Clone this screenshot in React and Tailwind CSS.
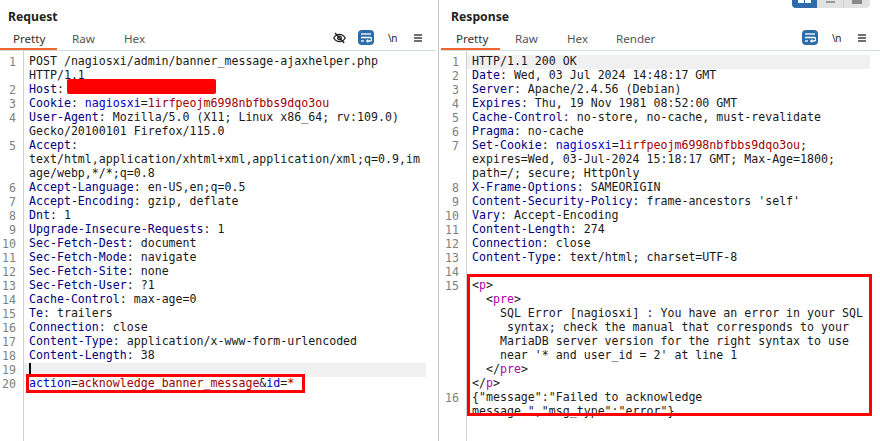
import React from 'react';

// token helpers: k = header name, n = param name, v = param value, t = tag name
const K = ({ children }) => <span className="text-[#000080]">{children}</span>;
const N = ({ children }) => <span className="text-[#0000c8]">{children}</span>;
const V = ({ children }) => <span className="text-[#a00000]">{children}</span>;
const T = ({ children }) => <span className="text-[#b000b0]">{children}</span>;

const requestRows = [
  { no: 1, text: 'POST /nagiosxi/admin/banner_message-ajaxhelper.php' },
  { text: 'HTTP/1.1' },
  { no: 2, text: <><K>Host</K>: <span className="absolute left-[43px] -top-[4px] h-[15px] w-[149px] rounded-[2px] bg-[#ff0000]" /></> },
  { no: 3, text: <><K>Cookie</K>: <N>nagiosxi</N>=<V>1irfpeojm6998nbfbbs9dqo3ou</V></> },
  { no: 4, text: <><K>User-Agent</K>: Mozilla/5.0 (X11; Linux x86_64; rv:109.0)</> },
  { text: 'Gecko/20100101 Firefox/115.0' },
  { no: 5, text: <><K>Accept</K>:</> },
  { text: 'text/html,application/xhtml+xml,application/xml;q=0.9,im' },
  { text: 'age/webp,*/*;q=0.8' },
  { no: 6, text: <><K>Accept-Language</K>: en-US,en;q=0.5</> },
  { no: 7, text: <><K>Accept-Encoding</K>: gzip, deflate</> },
  { no: 8, text: <><K>Dnt</K>: 1</> },
  { no: 9, text: <><K>Upgrade-Insecure-Requests</K>: 1</> },
  { no: 10, text: <><K>Sec-Fetch-Dest</K>: document</> },
  { no: 11, text: <><K>Sec-Fetch-Mode</K>: navigate</> },
  { no: 12, text: <><K>Sec-Fetch-Site</K>: none</> },
  { no: 13, text: <><K>Sec-Fetch-User</K>: ?1</> },
  { no: 14, text: <><K>Cache-Control</K>: max-age=0</> },
  { no: 15, text: <><K>Te</K>: trailers</> },
  { no: 16, text: <><K>Connection</K>: close</> },
  { no: 17, text: <><K>Content-Type</K>: application/x-www-form-urlencoded</> },
  { no: 18, text: <><K>Content-Length</K>: 38</> },
  { no: 19, text: <span className="absolute left-[5px] top-0 h-[11px] w-[2px] bg-black" />, active: true },
  { no: 20, text: <><N>action</N>=<V>acknowledge_banner_message</V>&amp;<N>id</N>=<V>*</V></> },
];

const responseRows = [
  { no: 1, text: 'HTTP/1.1 200 OK', active: true },
  { no: 2, text: <><K>Date</K>: Wed, 03 Jul 2024 14:48:17 GMT</> },
  { no: 3, text: <><K>Server</K>: Apache/2.4.56 (Debian)</> },
  { no: 4, text: <><K>Expires</K>: Thu, 19 Nov 1981 08:52:00 GMT</> },
  { no: 5, text: <><K>Cache-Control</K>: no-store, no-cache, must-revalidate</> },
  { no: 6, text: <><K>Pragma</K>: no-cache</> },
  { no: 7, text: <><K>Set-Cookie</K>: <N>nagiosxi</N>=<V>1irfpeojm6998nbfbbs9dqo3ou</V>;</> },
  { text: 'expires=Wed, 03-Jul-2024 15:18:17 GMT; Max-Age=1800;' },
  { text: 'path=/; secure; HttpOnly' },
  { no: 8, text: <><K>X-Frame-Options</K>: SAMEORIGIN</> },
  { no: 9, text: <><K>Content-Security-Policy</K>: frame-ancestors 'self'</> },
  { no: 10, text: <><K>Vary</K>: Accept-Encoding</> },
  { no: 11, text: <><K>Content-Length</K>: 274</> },
  { no: 12, text: <><K>Connection</K>: close</> },
  { no: 13, text: <><K>Content-Type</K>: text/html; charset=UTF-8</> },
  { no: 14, text: '' },
  { no: 15, text: <>&lt;<T>p</T>&gt;</> },
  { text: <>  &lt;<T>pre</T>&gt;</> },
  { text: "    SQL Error [nagiosxi] : You have an error in your SQL" },
  { text: "     syntax; check the manual that corresponds to your" },
  { text: '    MariaDB server version for the right syntax to use' },
  { text: "    near '* and user_id = 2' at line 1" },
  { text: <>  &lt;/<T>pre</T>&gt;</> },
  { text: <>&lt;/<T>p</T>&gt;</> },
  { no: 16, text: '{"message":"Failed to acknowledge' },
  { text: 'message.","msg_type":"error"}' },
];

const EyeSlash = () => (
  <svg width="13" height="12" viewBox="0 0 13 12" fill="none" stroke="#222" strokeWidth="1.3">
    <path d="M0.8 6C2.2 3.6 4.2 2.4 6.5 2.4S10.8 3.6 12.2 6C10.8 8.4 8.8 9.6 6.5 9.6S2.2 8.4 0.8 6Z" />
    <circle cx="6.5" cy="6" r="1.8" />
    <path d="M2 1l9.2 10" />
  </svg>
);

const WrapIcon = () => (
  <span className="flex h-[15px] w-[16px] items-center justify-center rounded-[4px] bg-[#2d6ca8]">
    <svg width="12" height="11" viewBox="0 0 12 11" fill="none" stroke="white" strokeWidth="1.3">
      <path d="M1 2h10" />
      <path d="M1 5.5h9a1.6 1.6 0 0 1 0 3.5H7" />
      <path d="M8.2 7.6 6.8 9l1.4 1.4" />
      <path d="M1 9h3" />
    </svg>
  </span>
);

const MenuIcon = () => (
  <span className="flex w-[8px] flex-col gap-px">
    <span className="h-[2px] bg-[#6f6f6f]" />
    <span className="h-[2px] bg-[#6f6f6f]" />
    <span className="h-[2px] bg-[#6f6f6f]" />
  </span>
);

const CodeRow = ({ row }) => (
  <div className="flex h-[14px]">
    <div className="w-[24px] shrink-0 border-r border-[#d0d0d0] pr-[7px] text-right leading-[14px] text-[#808080]">
      {row.no}
    </div>
    <div className={`relative flex-1 whitespace-pre pl-[5px] leading-[12px] ${row.active ? 'bg-[#f0f0f0]' : ''}`}>
      {row.text}
    </div>
  </div>
);

const tabWidths = ['w-[57px] pl-[13px]', 'w-[52px] pl-[15px]', 'w-[49px] pl-[15px]', 'pl-[15px]'];

const Pane = ({ title, tabs, rows, showEye, widthClass, titleClass, bodyClass, ruleClass, iconsClass }) => (
  <div className={`relative flex h-full shrink-0 flex-col ${widthClass}`}>
    <h2 className={`h-[33px] pt-[8px] text-[12.2px] font-bold leading-[17px] text-[#222] ${titleClass}`}>{title}</h2>
    <div className={`flex h-[18px] border-b border-[#d4dcdc] ${ruleClass}`}>
      {tabs.map((tab, i) => (
        <div
          key={tab}
          className={`h-[17px] text-[11.6px] leading-[12px] ${
            i === 0 && tabs.length === 4 ? 'w-[59px] pl-[15px]' : tabWidths[i]
          } ${i === 0 ? 'border-b-2 border-[#f0642d] text-[#333]' : 'text-[#555]'}`}
        >
          {tab}
        </div>
      ))}
    </div>
    <div className={`flex flex-1 flex-col font-['DejaVu_Sans_Mono'] text-[11.6px] text-[#1a1a1a] ${bodyClass}`}>
      <div className="h-[4px] w-[24px] shrink-0 border-r border-[#d0d0d0]" />
      {rows.map((row, i) => (
        <CodeRow key={i} row={row} />
      ))}
      <div className="w-[24px] flex-1 border-r border-[#d0d0d0]" />
    </div>
    <div className={`absolute top-[30px] flex items-center ${iconsClass}`}>
      {showEye && (
        <span className="mr-[12px]">
          <EyeSlash />
        </span>
      )}
      <WrapIcon />
      <span className="ml-[14px] text-[10px] leading-[14px] tracking-tighter text-[#222]">\n</span>
      <span className="ml-[17px]">
        <MenuIcon />
      </span>
    </div>
  </div>
);

export default function App() {
  return (
    <div className="relative flex h-[441px] w-[880px] overflow-hidden bg-white font-['Noto_Sans',sans-serif]">
      <Pane
        title="Request"
        tabs={['Pretty', 'Raw', 'Hex']}
        rows={requestRows}
        showEye
        widthClass="w-[438px]"
        titleClass="pl-[8px]"
        bodyClass="pr-[12px]"
        ruleClass="mr-[2px]"
        iconsClass="right-[16px]"
      />
      <div className="w-px shrink-0 bg-[#c8c8c8]" />
      <Pane
        title="Response"
        tabs={['Pretty', 'Raw', 'Hex', 'Render']}
        rows={responseRows}
        widthClass="w-[441px]"
        titleClass="pl-[12px]"
        bodyClass="pl-[4px] pr-[10px]"
        ruleClass="ml-[2px]"
        iconsClass="right-[14px]"
      />
      {/* layout toggle */}
      <div className="absolute right-[10px] top-0 flex h-[8px] w-[78px] overflow-hidden rounded-b-[4px] bg-[#e2e2e2]">
        <div className="flex w-[25px] items-start justify-center gap-px bg-[#2d6ca8]">
          <span className="h-[3px] w-[6px] bg-white" />
          <span className="h-[3px] w-[6px] bg-white" />
        </div>
        <div className="flex w-[27px] justify-center border-r border-[#cfcfcf]">
          <span className="mt-px h-[2px] w-[9px] bg-[#9a9a9a]" />
        </div>
        <div className="flex flex-1 justify-center">
          <span className="h-[4px] w-[10px] bg-[#8a8a8a]" />
        </div>
      </div>
      {/* highlight boxes drawn on the shot */}
      <div className="absolute left-[26px] top-[374px] h-[19px] w-[279px] border-[3px] border-[#ff0000]" />
      <div className="absolute left-[467px] top-[274px] h-[142px] w-[405px] border-[3px] border-[#ff0000]" />
    </div>
  );
}
